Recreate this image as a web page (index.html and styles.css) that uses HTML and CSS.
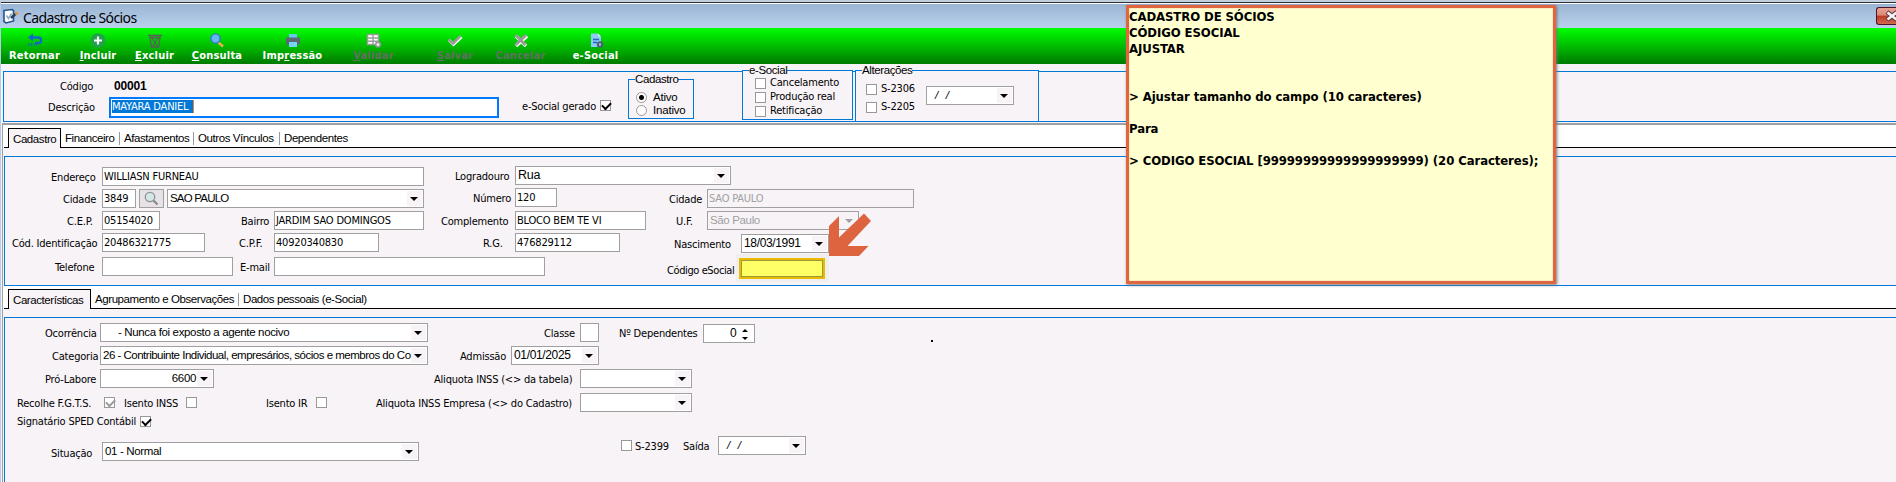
FILE: index.html
```
<!DOCTYPE html>
<html lang="pt-BR">
<head>
    <meta charset="UTF-8">
    <title>Cadastro de Sócios</title>
    <link rel="stylesheet" href="styles.css">
</head>
<body>
    <div class="window">
        <div class="titlebar">
            <svg class="app-icon" width="16" height="16" viewBox="0 0 16 16">
                <path d="M1 2.500l8-1 1.500 1v10.500l-7.500 2-2-1.500z" fill="#fff" stroke="#24578f" stroke-width="1.600"/>
                <path d="M3.500 7.500l2 3 3-5" fill="none" stroke="#8fa9c4" stroke-width="1.500"/>
                <path d="M8 10l5-4.500" stroke="#27415f" stroke-width="2.500"/>
                <path d="M12.500 6.500l2-2" stroke="#e59a3c" stroke-width="2.500"/>
            </svg>
            <span class="title">Cadastro de Sócios</span>
            <div class="close">
                <svg width="14" height="12" viewBox="0 0 14 12"><path d="M2 2l10 8M12 2l-10 8" stroke="#5a3a44" stroke-width="4.500"/><path d="M2.500 2.500l9 7M11.500 2.500l-9 7" stroke="#f3f3f3" stroke-width="2.600"/></svg>
            </div>
        </div>
        <div class="toolbar">
            <div class="tool retornar">
                <svg width="16" height="15" viewBox="0 0 16 15"><path d="M4 4.500h7q3 0 3 3t-3 2.500H8" fill="none" stroke="#1565c8" stroke-width="2.400"/><path d="M6 0.500L1 4.500 6 8.500z" fill="#1565c8"/><path d="M2 10v3M4.500 10v3M7 10v3M9.500 10v3" stroke="#1565c8"/></svg>
                <span>Retornar</span>
            </div>
            <div class="tool incluir">
                <svg width="16" height="15" viewBox="0 0 16 15"><circle cx="8" cy="7.500" r="7.300" fill="#23a04c"/><path d="M8 3.500v8M4 7.500h8" stroke="#fff" stroke-width="2.200"/></svg>
                <span><u>I</u>ncluir</span>
            </div>
            <div class="tool excluir">
                <svg width="16" height="15" viewBox="0 0 16 15"><path d="M1 2.500h14M3 4.500l1.500 9.500h7L13 4.500zM5 5l5.500 8.500M11 5L5.500 13.500" fill="none" stroke="#575f57" stroke-width="1.300"/></svg>
                <span><u>E</u>xcluir</span>
            </div>
            <div class="tool consulta">
                <svg width="16" height="15" viewBox="0 0 16 15"><path d="M9.500 9.500l4.500 4" stroke="#e9b04c" stroke-width="2.500"/><circle cx="6.500" cy="5.500" r="4.600" fill="#62b8f5" stroke="#3675c4" stroke-width="1.400"/></svg>
                <span><u>C</u>onsulta</span>
            </div>
            <div class="tool impressao">
                <svg width="16" height="15" viewBox="0 0 16 15"><path d="M4 1h8v4H4z" fill="#66c8f2"/><path d="M1 4.500h14v7H1z" fill="#5b6872"/><path d="M4 9h8v5H4z" fill="#74d4fa"/></svg>
                <span>Imp<u>r</u>essão</span>
            </div>
            <div class="tool off validar">
                <svg width="16" height="15" viewBox="0 0 16 15"><path d="M1 1h12v11H1z" fill="#fff"/><path d="M1.500 1.500h11v10h-11zM1.500 5h11M1.500 8.300h11M7 1.500v10" fill="none" stroke="#9b9b9b" stroke-width="1.400"/><circle cx="12" cy="11.500" r="2.300" fill="#eee" stroke="#999" stroke-width="1.600"/></svg>
                <span><u>V</u>alidar</span>
            </div>
            <div class="tool off salvar">
                <svg width="16" height="15" viewBox="0 0 16 15"><path d="M2 7l4.500 4.500L14.500 4" fill="none" stroke="#fff" stroke-width="3"/><path d="M1.500 6.500L6 10.500 13.500 3" fill="none" stroke="#9b9b9b" stroke-width="2.500"/></svg>
                <span><u>S</u>alvar</span>
            </div>
            <div class="tool off cancelar">
                <svg width="16" height="15" viewBox="0 0 16 15"><path d="M3 3l10 10M14 3L3 13" stroke="#fff" stroke-width="3.500"/><path d="M2.500 2l10 10M13 2L2.500 12" stroke="#999" stroke-width="3"/></svg>
                <span>Cancelar</span>
            </div>
            <div class="tool esocial">
                <svg width="16" height="15" viewBox="0 0 16 15"><path d="M3 0.500h7l3 3V14H3z" fill="#8ec9f8"/><path d="M10 0.500l3 3h-3z" fill="#d8efff"/><path d="M5 6.500h6M5 9.500h4" stroke="#1d69b8" stroke-width="1.300"/><circle cx="12" cy="11.500" r="2.200" fill="none" stroke="#4d6275" stroke-width="2"/></svg>
                <span>e-Social</span>
            </div>
        </div>

        <div class="header">
            <div class="ident">
                <div class="row"><label class="l-codigo">Código</label><b class="codigo">00001</b></div>
                <div class="row r-desc">
                    <label class="l-desc">Descrição</label>
                    <div class="desc"><span class="sel">MAYARA DANIEL</span></div>
                </div>
            </div>
            <div class="gerado"><label>e-Social gerado</label><i class="chk on"></i></div>
            <div class="group g-cadastro">
                <span class="legend">Cadastro</span>
                <div class="opt"><i class="radio on"></i>Ativo</div>
                <div class="opt"><i class="radio"></i>Inativo</div>
            </div>
            <div class="group g-esocial">
                <span class="legend">e-Social</span>
                <div class="opt"><i class="chk"></i>Cancelamento</div>
                <div class="opt"><i class="chk"></i>Produção real</div>
                <div class="opt"><i class="chk"></i>Retificação</div>
            </div>
            <div class="group g-alter">
                <span class="legend">Alterações</span>
                <div class="checks">
                    <div class="opt"><i class="chk"></i>S-2306</div>
                    <div class="opt"><i class="chk"></i>S-2205</div>
                </div>
                <div class="combo w88"><span class="slash">/&nbsp; /</span></div>
            </div>
        </div>

        <div class="tabs">
            <div class="tab active t1">Cadastro</div>
            <div class="tab t2">Financeiro</div>
            <div class="tab t3">Afastamentos</div>
            <div class="tab t4">Outros Vínculos</div>
            <div class="tab last">Dependentes</div>
        </div>
        <div class="page">
            <div class="panel cadastro">
                <div class="col left">
                    <div class="row"><label class="l-end">Endereço</label><div class="field w322">WILLIASN FURNEAU</div></div>
                    <div class="row">
                        <label class="l-cid">Cidade</label><div class="field w34">3849</div>
                        <div class="lupa"><svg width="15" height="15" viewBox="0 0 15 15"><path d="M9.500 9.500l4 4" stroke="#848484" stroke-width="2"/><circle cx="6" cy="6" r="4.700" fill="#d4e6e6" stroke="#8b9292" stroke-width="1.300"/></svg></div>
                        <div class="combo w257 caps">SAO PAULO</div>
                    </div>
                    <div class="row">
                        <label class="l-cep">C.E.P.</label><div class="field w58">05154020</div>
                        <label class="l-bairro">Bairro</label><div class="field w150">JARDIM SAO DOMINGOS</div>
                    </div>
                    <div class="row">
                        <label class="l-cod">Cód. Identificação</label><div class="field w103">20486321775</div>
                        <label class="l-cpf">C.P.F.</label><div class="field w105">40920340830</div>
                    </div>
                    <div class="row r-tel">
                        <label class="l-tel">Telefone</label><div class="field w131"></div>
                        <label class="l-mail">E-mail</label><div class="field w271"></div>
                    </div>
                </div>
                <div class="col mid">
                    <div class="row"><label class="l-log">Logradouro</label><div class="combo w216 rua">Rua</div></div>
                    <div class="row"><label class="l-num">Número</label><div class="field w42">120</div></div>
                    <div class="row r-comp"><label class="l-comp">Complemento</label><div class="field w131">BLOCO BEM TE VI</div></div>
                    <div class="row"><label class="l-rg">R.G.</label><div class="field w105">476829112</div></div>
                </div>
                <div class="col right">
                    <div class="row"><label class="l-cid2">Cidade</label><div class="field off w207">SAO PAULO</div></div>
                    <div class="row"><label class="l-uf">U.F.</label><div class="combo off w152">São Paulo</div></div>
                    <div class="row r-nasc"><label class="l-nasc">Nascimento</label><div class="combo w88 date">18/03/1991</div></div>
                    <div class="row r-esoc"><label class="l-esoc">Código eSocial</label><div class="mark"><div class="mark-field"></div></div></div>
                </div>
                <svg class="arrow" width="45" height="46" viewBox="0 0 45 46"><path d="M1 43V13L11 3v21.500L36 0.500 43 8 19.500 33H40.500L31 43z" fill="#de6440"/></svg>
            </div>
        </div>

        <div class="tabs second">
            <div class="tab active s1">Características</div>
            <div class="tab s2">Agrupamento e Observações</div>
            <div class="tab last">Dados pessoais (e-Social)</div>
        </div>
        <div class="page">
            <div class="panel carac">
                <div class="row">
                    <label class="l-oco">Ocorrência</label><div class="combo w328 oco">- Nunca foi exposto a agente nocivo</div>
                    <label class="l-classe">Classe</label><div class="field w19"></div>
                    <label class="l-dep">Nº Dependentes</label><div class="spin"><span>0</span><i class="up"></i><i class="down"></i></div>
                </div>
                <div class="row">
                    <label class="l-cat">Categoria</label><div class="combo w328 cat">26 - Contribuinte Individual, empresários, sócios e membros do Co</div>
                    <label class="l-adm">Admissão</label><div class="combo w88 date">01/01/2025</div>
                </div>
                <div class="row">
                    <label class="l-pro">Pró-Labore</label><div class="combo w114 num">6600</div>
                    <label class="l-aliq">Aliquota INSS (&lt;&gt; da tabela)</label><div class="combo w112"></div>
                </div>
                <div class="row r-fgts">
                    <label class="l-fgts">Recolhe F.G.T.S.</label><i class="chk on dim"></i>
                    <label class="l-inss">Isento INSS</label><i class="chk"></i>
                    <label class="l-ir">Isento IR</label><i class="chk"></i>
                    <label class="l-emp">Aliquota INSS Empresa (&lt;&gt; do Cadastro)</label><div class="combo w112"></div>
                </div>
                <div class="row r-sped"><label class="l-sped">Signatário SPED Contábil</label><i class="chk on"></i></div>
                <div class="row r-sit">
                    <label class="l-sit">Situação</label><div class="combo w317">01 - Normal</div>
                    <div class="saida"><i class="chk"></i><label class="l-2399">S-2399</label><label class="l-saida">Saída</label><div class="combo w88"><span class="slash">/&nbsp; /</span></div></div>
                </div>
                <i class="dot"></i>
            </div>
        </div>

        <div class="note">
            <p>CADASTRO DE SÓCIOS</p>
            <p>CÓDIGO ESOCIAL</p>
            <p>AJUSTAR</p>
            <br><br>
            <p>&gt; Ajustar tamanho do campo (10 caracteres)</p>
            <br>
            <p>Para</p>
            <br>
            <p>&gt; CODIGO ESOCIAL [99999999999999999999) (20 Caracteres);</p>
        </div>
    </div>
</body>
</html>
```
FILE: styles.css
```
* {
    box-sizing: border-box;
}
body {
    margin: 0;
    overflow: hidden;
    background: #f7f3f7;
    font-family: "DejaVu Sans Condensed", "DejaVu Sans", sans-serif;
    font-stretch: condensed;
    font-size: 11px;
    letter-spacing: -0.2px;
    color: #000;
}
svg {
    display: block;
}
.window {
    position: relative;
    width: 1896px;
    height: 482px;
    overflow: hidden;
    border-left: 1px solid #b5cdec;
    border-top: 2px solid #c3cfdc;
    white-space: nowrap;
}
.titlebar {
    display: flex;
    height: 26px;
    padding-left: 2px;
    border-top: 1px solid #2d3238;
    box-shadow: inset 0 1px #fff;
    background: linear-gradient(#9ab4d3, #b9d1ec);
}
.app-icon {
    margin-top: 5px;
}
.title {
    margin-left: 4px;
    font: 14px/29px "Noto Sans", sans-serif;
    letter-spacing: -0.6px;
}
.close {
    margin: 4px 0 0 auto;
    width: 20px;
    height: 18px;
    padding: 2px 0 0 8px;
    border: 1px solid #4b1424;
    border-right: none;
    border-radius: 3px 0 0 3px;
    background: linear-gradient(#e8a497, #dc8876 45%, #b93a20 50%, #d4694f);
    overflow: hidden;
}
.toolbar {
    display: flex;
    height: 36px;
    background: linear-gradient(#00ff00, #007a00);
    color: #fff;
    font-weight: bold;
    letter-spacing: 0.2px;
}
.tool {
    display: flex;
    flex-direction: column;
    align-items: center;
    padding-top: 5px;
    line-height: 16px;
}
.tool.off {
    color: #5f735f;
}
.retornar { width: 51px; margin-left: 8px; }
.incluir { width: 36px; margin-left: 20px; }
.excluir { width: 37px; margin-left: 20px; }
.consulta { width: 48px; margin-left: 20px; }
.impressao { width: 61px; margin-left: 21px; }
.validar { width: 39px; margin-left: 31px; }
.salvar { width: 36px; margin-left: 44px; }
.cancelar { width: 49px; margin-left: 23px; }
.esocial { width: 45px; margin-left: 28px; }

.row {
    display: flex;
}
label {
    flex: none;
    line-height: 21px;
}

/* header */
.header {
    display: flex;
    height: 51px;
    margin: 7px 0 1px 2px;
    border: 1px solid #0078d7;
    border-right: none;
}
.ident {
    width: 500px;
    flex: none;
    padding-top: 4px;
}
.l-codigo { width: 110px; padding-left: 56px; }
.codigo {
    font: bold 12px/21px "Liberation Sans", sans-serif;
}
.r-desc {
    height: 21px;
    margin-top: 0;
}
.l-desc { width: 105px; padding-left: 44px; line-height: 22px; }
.desc {
    width: 390px;
    height: 21px;
    padding: 1px;
    border: 2px solid #0078ff;
    background: #fff;
}
.sel {
    display: block;
    width: 82px;
    height: 13px;
    border-right: 1px solid #e8813c;
    background: #0078d7;
    color: #fff;
    line-height: 13px;
}
.gerado {
    display: flex;
    width: 124px;
    flex: none;
    padding: 24px 0 0 18px;
}
.gerado label { width: 78px; }
.gerado .chk { margin-top: 4px; }
.chk {
    position: relative;
    flex: none;
    width: 11px;
    height: 11px;
    border: 1px solid #999;
    background: #fff;
}
.chk.on::after {
    content: "";
    position: absolute;
    left: 1px;
    top: 1px;
    width: 7px;
    height: 4px;
    border-left: 2px solid #000;
    border-bottom: 2px solid #000;
    transform: rotate(-45deg);
}
.chk.dim::after { border-color: #999; }
.group {
    position: relative;
    flex: none;
    border: 1px solid #0078d7;
    background: #f7f3f7;
}
.legend {
    position: absolute;
    left: 6px;
    top: -7px;
    background: #f7f3f7;
    font: 11.5px/13px "Liberation Sans", sans-serif;
    letter-spacing: -0.4px;
}
.opt {
    display: flex;
    align-items: center;
}
.g-cadastro {
    width: 66px;
    height: 40px;
    margin-top: 7px;
    padding: 11px 0 0 7px;
    font: 11.5px/13px "Liberation Sans", sans-serif;
}
.radio {
    width: 11px;
    height: 11px;
    margin: 1px 6px 1px 0;
    border: 1px solid #999;
    border-radius: 50%;
    background: #fff;
}
.radio.on {
    background: radial-gradient(#000 2px, #fff 3px);
}
.g-esocial {
    width: 111px;
    height: 50px;
    margin: -2px 0 0 48px;
    padding: 5px 0 0 12px;
    line-height: 14px;
}
.g-esocial .chk, .g-alter .chk { margin-right: 4px; }
.g-alter {
    display: flex;
    width: 184px;
    height: 52px;
    margin: -2px 0 0 2px;
    padding: 9px 0 0 10px;
    line-height: 18px;
}
.checks { width: 60px; }
.g-alter .combo { margin-top: 6px; }

/* tabs */
.tabs {
    display: flex;
    height: 25px;
    margin-left: 1px;
    padding: 3px 0 0 6px;
    border-top: 2px solid #a0a0a0;
    border-left: 1px solid #a0a0a0;
    background: linear-gradient(#000, #000) 1px 100% / 100% 1px no-repeat #fff;
    font: 11.5px/20px "Liberation Sans", sans-serif;
    letter-spacing: -0.42px;
}
.tab {
    height: 13px;
    margin-top: 4px;
    padding-left: 4px;
    border-right: 1px solid #999;
    line-height: 13px;
}
.tab.active {
    height: 20px;
    margin: 0;
    border: 1px solid #000;
    border-bottom: none;
    background: #f7f3f7;
    line-height: 20px;
}
.tab.last { border: none; }
.t1.active { width: 53px; margin-left: -1px; }
.t2 { width: 59px; }
.t3 { width: 74px; }
.t4 { width: 86px; }
.second {
    height: 23px;
    border-top: none;
}
.s1.active { width: 83px; margin-left: -1px; }
.s2 { width: 148px; }
.page {
    margin-left: 1px;
    padding-left: 1px;
    padding-top: 8px;
    border-left: 1px solid #a0a0a0;
}

/* fields */
.panel {
    position: relative;
    display: flex;
    border: 1px solid #0078d7;
    border-right: none;
}
.col .row {
    height: 19px;
    margin-bottom: 3px;
}
.field, .combo, .spin {
    flex: none;
    height: 19px;
    padding-left: 1px;
    border: 1px solid #a0a0a0;
    background: #fff;
    line-height: 17px;
}
.combo {
    position: relative;
    padding-left: 2px;
    font: 11.5px/17px "Liberation Sans", sans-serif;
    letter-spacing: -0.35px;
}
.combo::before {
    content: "";
    position: absolute;
    right: 1px;
    top: 1px;
    width: 15px;
    height: 15px;
    background: #f7f3f7;
}
.combo::after {
    content: "";
    position: absolute;
    right: 5px;
    top: 7px;
    border: 4px solid transparent;
    border-top-color: #000;
    border-bottom: none;
}
.off {
    background: none;
    color: #a0a0a0;
}
.combo.off::after { border-top-color: #a0a0a0; }
.combo.caps { letter-spacing: -0.8px; }
.slash {
    margin-left: 6px;
    font-style: italic;
    letter-spacing: 0.4px;
}
.w19 { width: 19px; }
.w34 { width: 34px; }
.w42 { width: 42px; }
.w58 { width: 58px; }
.w88 { width: 88px; }
.w103 { width: 103px; }
.w105 { width: 105px; }
.w112 { width: 112px; }
.w114 { width: 114px; }
.w131 { width: 131px; }
.w150 { width: 150px; }
.w152 { width: 152px; }
.w207 { width: 207px; }
.w216 { width: 216px; }
.w257 { width: 257px; }
.w271 { width: 271px; }
.w317 { width: 317px; }
.w322 { width: 322px; }
.w328 { width: 328px; }

.date { font-size: 12px; }
.cadastro { height: 130px; }
.left { width: 425px; flex: none; padding-top: 10px; }
.mid { width: 232px; flex: none; padding-top: 9px; }
.right { flex: none; padding-top: 32px; }
.left .r-tel { margin-top: 5px; }
.l-end { width: 97px; padding-left: 46px; }
.l-cid { width: 97px; padding-left: 58px; }
.l-cep { width: 97px; padding-left: 62px; }
.l-cod { width: 97px; padding-left: 7px; }
.l-tel { width: 97px; padding-left: 50px; }
.l-bairro { width: 114px; padding-left: 81px; }
.l-cpf { width: 69px; padding-left: 34px; }
.l-mail { width: 41px; padding-left: 7px; }
.lupa {
    width: 25px;
    height: 19px;
    margin: 0 3px;
    padding: 1px 0 0 4px;
    border: 1px solid #a0a0a0;
    background: #e6e2e6;
}
.l-log { width: 85px; padding-left: 25px; }
.l-num { width: 85px; padding-left: 43px; }
.l-comp { width: 85px; padding-left: 11px; }
.l-rg { width: 85px; padding-left: 53px; }
.mid .r-comp { margin-top: 4px; }
.rua { font-size: 12.5px; letter-spacing: -0.3px; }
.l-cid2 { width: 45px; padding-left: 7px; }
.l-uf { width: 45px; padding-left: 14px; }
.l-nasc { width: 79px; padding-left: 12px; }
.right .r-nasc { margin-top: 4px; }
.right .r-esoc { margin-top: -2px; }
.l-esoc {
    width: 74px;
    padding-left: 5px;
    line-height: 33px;
    letter-spacing: -0.4px;
}
.mark {
    width: 93px;
    height: 28px;
    padding: 4px 4px 4px 3px;
    background: #efeff0;
}
.mark-field {
    height: 21px;
    border: 2px solid #ecb800;
    box-shadow: inset 0 0 0 1px #9b9a38;
    background: #ffff66;
}
.arrow {
    position: absolute;
    left: 823px;
    top: 56px;
}

.carac {
    height: 200px;
    display: block;
    padding-top: 5px;
}
.carac .row {
    height: 19px;
    margin-bottom: 4px;
}
.l-oco { width: 95px; padding-left: 40px; }
.oco { padding-left: 17px; }
.l-classe { width: 152px; padding-left: 116px; }
.l-dep { width: 104px; padding-left: 20px; }
.spin {
    position: relative;
    width: 52px;
    height: 19px;
    margin-top: 1px;
    padding-left: 26px;
    font: 12px/17px "Liberation Sans", sans-serif;
}
.up, .down {
    position: absolute;
    right: 6px;
    top: 4px;
    border: 3px solid transparent;
    border-top: none;
    border-bottom-color: #000;
}
.down {
    top: 12px;
    border-top: 3px solid #000;
    border-bottom: none;
}
.l-cat { width: 95px; padding-left: 47px; }
.cat { letter-spacing: -0.5px; }
.l-adm { width: 83px; padding-left: 32px; }
.l-pro { width: 95px; padding-left: 40px; }
.num { padding-right: 17px; text-align: right; }
.l-aliq { width: 366px; padding-left: 220px; }
.carac .r-fgts { margin-top: 5px; }
.r-fgts .chk { margin-top: 4px; }
.l-fgts { width: 99px; padding-left: 12px; }
.l-inss { width: 71px; padding-left: 9px; }
.l-ir { width: 119px; padding-left: 69px; }
.l-emp { width: 253px; padding-left: 49px; }
.carac .r-sped { height: 11px; margin: 0; }
.l-sped { width: 135px; padding-left: 12px; line-height: 12px; }
.carac .r-sit { margin-top: 15px; }
.l-sit { width: 97px; padding-left: 46px; line-height: 23px; }
.saida {
    display: flex;
    margin: -6px 0 0 202px;
}
.saida .chk { margin-top: 4px; }
.l-2399 { width: 51px; padding-left: 3px; }
.l-saida { width: 35px; }
.dot {
    position: absolute;
    left: 926px;
    top: 22px;
    width: 2px;
    height: 2px;
    background: #000;
}

/* sticky note over the form */
.note {
    position: absolute;
    left: 1125px;
    top: 3px;
    width: 430px;
    height: 279px;
    padding-top: 1px;
    border: 3px solid #e0663f;
    box-shadow: 1px 1px 3px #777, inset 0 0 1px #b44;
    background: #ffffcf;
    font-size: 13px;
    font-weight: bold;
    line-height: 16px;
    letter-spacing: -0.09px;
}
.note p { margin: 0; }
```
